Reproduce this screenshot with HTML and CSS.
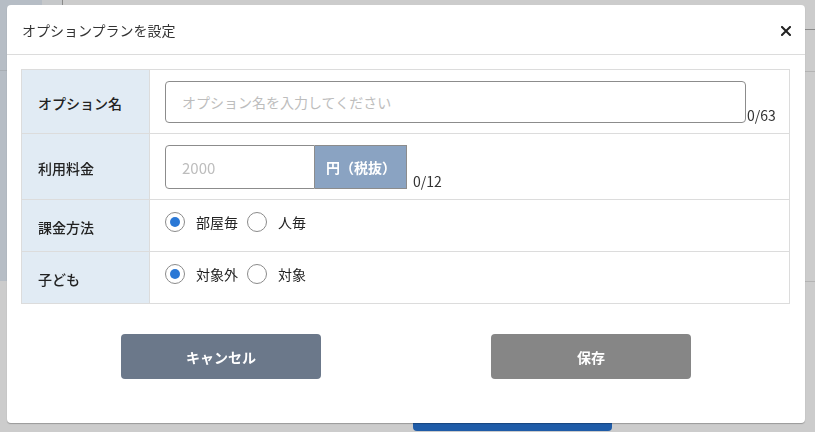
FILE: index.html
```html
<!DOCTYPE html>
<html lang="ja">
<head>
    <meta charset="UTF-8">
    <meta name="viewport" content="width=device-width, initial-scale=1.0">
    <title>オプションプランを設定</title>
    <link rel="stylesheet" href="styles.css">
</head>
<body>
    <!-- page behind the overlay -->
    <div class="backdrop">
        <div class="bg-side"></div>
        <div class="bg-side2"></div>
        <div class="bg-vline"></div>
        <div class="bg-hline left"></div>
        <div class="bg-hline r1"></div>
        <div class="bg-hline r2"></div>
        <div class="bg-hline r3"></div>
        <div class="bg-button"></div>
    </div>

    <div class="modal">
        <div class="modal-header">
            <h2>オプションプランを設定</h2>
            <button class="close" aria-label="閉じる">
                <svg width="10" height="10" viewBox="0 0 10 10">
                    <path d="M1 1 L9 9 M9 1 L1 9" stroke="#222" stroke-width="2" stroke-linecap="square"/>
                </svg>
            </button>
        </div>
        <div class="modal-body">
            <div class="form-table">
                <div class="row row-name">
                    <div class="label">オプション名</div>
                    <div class="value">
                        <input class="text-input wide" type="text" placeholder="オプション名を入力してください">
                        <span class="counter">0/63</span>
                    </div>
                </div>
                <div class="row row-price">
                    <div class="label">利用料金</div>
                    <div class="value">
                        <div class="price-group">
                            <input class="text-input price" type="text" placeholder="2000">
                            <span class="addon">円（税抜）</span>
                        </div>
                        <span class="counter">0/12</span>
                    </div>
                </div>
                <div class="row row-radio">
                    <div class="label">課金方法</div>
                    <div class="value">
                        <label class="radio"><span class="dot checked"></span>部屋毎</label>
                        <label class="radio"><span class="dot"></span>人毎</label>
                    </div>
                </div>
                <div class="row row-radio">
                    <div class="label">子ども</div>
                    <div class="value">
                        <label class="radio"><span class="dot checked"></span>対象外</label>
                        <label class="radio"><span class="dot"></span>対象</label>
                    </div>
                </div>
            </div>
            <div class="actions">
                <button class="btn cancel">キャンセル</button>
                <button class="btn save">保存</button>
            </div>
        </div>
    </div>
</body>
</html>
```

FILE: styles.css
```css
html, body {
    height: 100%;
    margin: 0;
    padding: 0;
    font-family: "Noto Sans CJK JP", "Noto Sans", sans-serif;
    background-color: #cccccc;
    overflow: hidden;
}
.backdrop {
    position: fixed;
    inset: 0;
}
.bg-side {
    position: absolute;
    left: 0;
    top: 0;
    width: 42px;
    height: 281px;
    background-color: #b6bdc5;
}
.bg-side2 {
    position: absolute;
    left: 42px;
    top: 0;
    width: 20px;
    height: 281px;
    background-color: #c6c8ca;
}
.bg-vline {
    position: absolute;
    left: 62px;
    top: 0;
    width: 1px;
    height: 10px;
    background-color: #8a8a8a;
}
.bg-hline {
    position: absolute;
    height: 1px;
    background-color: #b4b4b4;
}
.bg-hline.left {
    left: 0;
    top: 70px;
    width: 8px;
    background-color: #a8aeb4;
}
.bg-hline.r1 {
    right: 0;
    top: 29px;
    width: 12px;
    background-color: #8a8a8a;
}
.bg-hline.r2 {
    right: 0;
    top: 71px;
    width: 12px;
}
.bg-hline.r3 {
    right: 0;
    top: 281px;
    width: 12px;
}
.bg-button {
    position: absolute;
    left: 413px;
    top: 410px;
    width: 199px;
    height: 21px;
    background-color: #1f5ca8;
    border-radius: 4px;
}

.modal {
    position: fixed;
    left: 7px;
    top: 5px;
    width: 798px;
    height: 418px;
    background-color: #fff;
    border-radius: 4px;
    box-shadow: 0 1px 1px rgba(0, 0, 0, 0.25);
    box-sizing: border-box;
    display: flex;
    flex-direction: column;
}
.modal-header {
    height: 49px;
    display: flex;
    align-items: center;
    justify-content: space-between;
    padding: 0 14px 0 15px;
    border-bottom: 1px solid #dcdcdc;
}
.modal-header h2 {
    margin: 0;
    font-size: 14px;
    font-weight: 400;
    color: #333;
    padding-top: 1px;
}
.close {
    border: none;
    background: none;
    padding: 0;
    width: 10px;
    height: 10px;
    cursor: pointer;
    display: flex;
    margin-top: 2px;
}
.modal-body {
    padding: 14px 15px 0 14px;
}
.form-table {
    border: 1px solid #dcdcdc;
}
.row {
    display: flex;
    border-top: 1px solid #dcdcdc;
}
.row:first-child {
    border-top: none;
}
.row-name { height: 63px; }
.row-price { height: 65px; }
.row-radio { height: 51px; }
.label {
    width: 111px;
    flex-shrink: 0;
    background-color: #e1ebf4;
    border-right: 1px solid #dcdcdc;
    padding: 3px 0 0 16px;
    display: flex;
    align-items: center;
    font-size: 14px;
    font-weight: 500;
    color: #222;
}
.value {
    flex: 1;
    display: flex;
    align-items: center;
    padding-left: 15px;
    min-width: 0;
}
.row-name .value, .row-price .value {
    align-items: flex-end;
    padding-bottom: 10px;
}
.row-radio .value {
    align-items: flex-start;
    padding-top: 12px;
}
.text-input {
    height: 42px;
    box-sizing: border-box;
    border: 1px solid #8c8c8c;
    border-radius: 4px;
    padding: 0 16px;
    font-family: inherit;
    font-size: 14px;
    color: #333;
    outline: none;
}
.text-input::placeholder {
    color: #bdbdbd;
}
.text-input.wide {
    width: 581px;
}
.counter {
    font-size: 14px;
    color: #333;
    line-height: 1;
    margin-left: 1px;
    padding-bottom: 1px;
}
.price-group {
    display: flex;
    height: 44px;
    margin-right: 5px;
}
.text-input.price {
    width: 150px;
    height: 44px;
    border-radius: 4px 0 0 4px;
    font-size: 15px;
}
.addon {
    width: 92px;
    box-sizing: border-box;
    border: 1px solid #8c8c8c;
    border-left: none;
    background-color: #8aa3c2;
    color: #fff;
    font-size: 14px;
    font-weight: 700;
    display: flex;
    align-items: center;
    padding-left: 11px;
}
.radio {
    display: flex;
    align-items: center;
    height: 20px;
    font-size: 14px;
    color: #222;
    margin-right: 9px;
    cursor: pointer;
}
.dot {
    width: 20px;
    height: 20px;
    box-sizing: border-box;
    border: 1px solid #8a8a8a;
    border-radius: 50%;
    margin-right: 11px;
    display: flex;
    align-items: center;
    justify-content: center;
}
.dot.checked::after {
    content: "";
    width: 10px;
    height: 10px;
    border-radius: 50%;
    background-color: #2a78d6;
}
.actions {
    display: flex;
    justify-content: space-between;
    padding: 30px 99px 0 100px;
}
.btn {
    width: 200px;
    height: 45px;
    border: none;
    border-radius: 4px;
    color: #fff;
    font-family: inherit;
    font-size: 14px;
    font-weight: 700;
    cursor: pointer;
}
.cancel {
    background-color: #6b788a;
}
.save {
    background-color: #868686;
}
```
